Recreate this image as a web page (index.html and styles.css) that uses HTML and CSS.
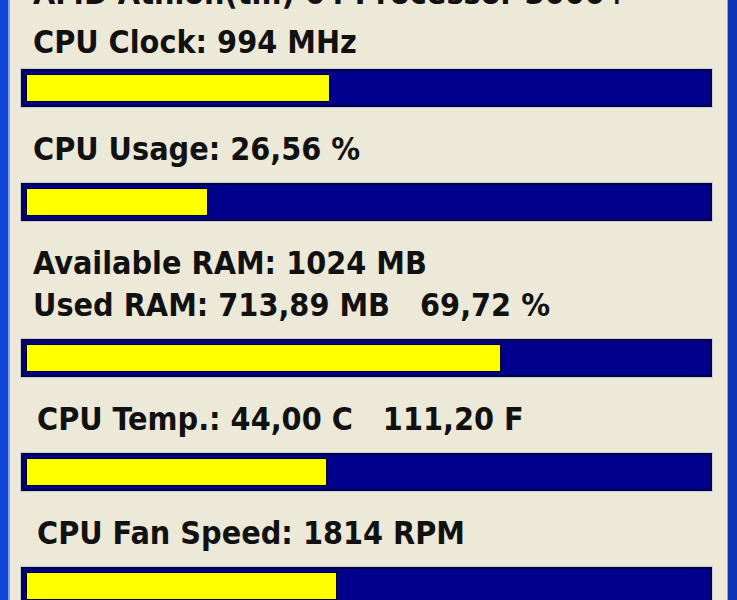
FILE: index.html
```html
<!DOCTYPE html>
<html>
<head>
    <meta charset="UTF-8">
    <title>System Monitor</title>
    <link rel="stylesheet" href="styles.css">
</head>
<body>
<div class="window">
    <div class="panel">
        <p class="label cpuName">AMD Athlon(tm) 64 Processor 3000+</p>

        <section class="stat first">
            <p class="label">CPU Clock: 994 MHz</p>
            <div class="meter"><i style="width: 44.5%"></i></div>
        </section>

        <section class="stat">
            <p class="label">CPU Usage: 26,56 %</p>
            <div class="meter"><i style="width: 26.56%"></i></div>
        </section>

        <section class="stat">
            <p class="label">Available RAM: 1024 MB</p>
            <p class="label">Used RAM: 713,89 MB&nbsp;&nbsp;&nbsp;69,72 %</p>
            <div class="meter"><i style="width: 69.72%"></i></div>
        </section>

        <section class="stat">
            <p class="label indent">CPU Temp.: 44,00 C&nbsp;&nbsp;&nbsp;111,20 F</p>
            <div class="meter"><i style="width: 44%"></i></div>
        </section>

        <section class="stat">
            <p class="label indent">CPU Fan Speed: 1814 RPM</p>
            <div class="meter"><i style="width: 45.5%"></i></div>
        </section>
    </div>
</div>
</body>
</html>
```

FILE: styles.css
```css
* {
    margin: 0;
    padding: 0;
    box-sizing: border-box;
}

html, body {
    height: 100%;
    overflow: hidden;
}

body {
    background: #ece9d8;
    font-family: "Liberation Sans Narrow", "DejaVu Sans Condensed", "Liberation Sans", sans-serif;
}

/* XP style blue window frame, left and right */
.window {
    display: flex;
    flex-direction: column;
    height: 100%;
    overflow: hidden;
    border-left: 8px solid #0f45d8;
    border-right: 9px solid #0c34b4;
    box-shadow: inset 2px 0 0 #7fa2f0, inset -1px 0 0 #8aa4e4;
}

.panel {
    padding: 0 16px 0 13px;
}

.label {
    padding-left: 12px;
    font-size: 32px;
    font-weight: bold;
    line-height: 42px;
    color: #111;
    white-space: nowrap;
}

.label.indent {
    padding-left: 16px;
}

/* processor name, scrolled half out of view */
.cpuName {
    margin-top: -28px;
}

.stat {
    margin-top: 21px;
}

.stat.first {
    margin-top: 7px;
}

/* progress bar: navy track, yellow fill */
.meter {
    height: 38px;
    margin-top: 13px;
    padding: 4px;
    background: #00008c;
    border: 2px solid #05053a;
    box-shadow: 0 0 0 1px #c9c9e6;
}

.stat.first .meter {
    margin-top: 6px;
}

.meter i {
    display: block;
    height: 100%;
    background: #ffff00;
    box-shadow: 0 0 0 1px #000;
}
```
